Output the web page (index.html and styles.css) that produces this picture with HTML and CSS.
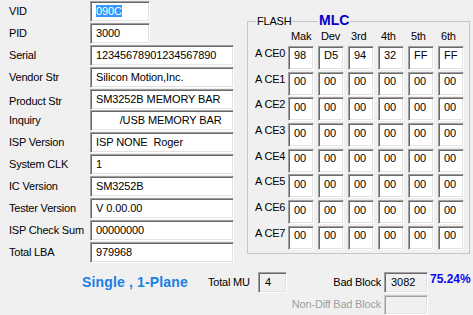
FILE: index.html
```html
<!DOCTYPE html>
<html>
<head>
<meta charset="utf-8">
<link rel="stylesheet" href="styles.css">
</head>
<body>
<div class="app">
  <div class="top">
    <div class="info">
      <span class="lbl">VID</span><div class="field short"><span class="sel">090C</span></div>
      <span class="lbl">PID</span><div class="field short">3000</div>
      <span class="lbl">Serial</span><div class="field">12345678901234567890</div>
      <span class="lbl">Vendor Str</span><div class="field">Silicon Motion,Inc.</div>
      <span class="lbl lower">Product Str</span><div class="field">SM3252B MEMORY BAR</div>
      <span class="lbl">Inquiry</span><div class="field">        /USB MEMORY BAR</div>
      <span class="lbl">ISP Version</span><div class="field">ISP NONE  Roger</div>
      <span class="lbl">System CLK</span><div class="field">1</div>
      <span class="lbl">IC Version</span><div class="field">SM3252B</div>
      <span class="lbl">Tester Version</span><div class="field">V 0.00.00</div>
      <span class="lbl">ISP Check Sum</span><div class="field">00000000</div>
      <span class="lbl">Total LBA</span><div class="field">979968</div>
    </div>
    <fieldset class="flash">
      <legend class="flash-title">FLASH<span class="mlc">MLC</span></legend>
      <div class="flash-grid">
        <span></span><span class="hd">Mak</span><span class="hd">Dev</span><span class="hd">3rd</span><span class="hd">4th</span><span class="hd">5th</span><span class="hd">6th</span>
        <span class="ce">A CE0</span><div class="cell">98</div><div class="cell">D5</div><div class="cell">94</div><div class="cell">32</div><div class="cell">FF</div><div class="cell">FF</div>
        <span class="ce">A CE1</span><div class="cell">00</div><div class="cell">00</div><div class="cell">00</div><div class="cell">00</div><div class="cell">00</div><div class="cell">00</div>
        <span class="ce">A CE2</span><div class="cell">00</div><div class="cell">00</div><div class="cell">00</div><div class="cell">00</div><div class="cell">00</div><div class="cell">00</div>
        <span class="ce">A CE3</span><div class="cell">00</div><div class="cell">00</div><div class="cell">00</div><div class="cell">00</div><div class="cell">00</div><div class="cell">00</div>
        <span class="ce">A CE4</span><div class="cell">00</div><div class="cell">00</div><div class="cell">00</div><div class="cell">00</div><div class="cell">00</div><div class="cell">00</div>
        <span class="ce">A CE5</span><div class="cell">00</div><div class="cell">00</div><div class="cell">00</div><div class="cell">00</div><div class="cell">00</div><div class="cell">00</div>
        <span class="ce">A CE6</span><div class="cell">00</div><div class="cell">00</div><div class="cell">00</div><div class="cell">00</div><div class="cell">00</div><div class="cell">00</div>
        <span class="ce">A CE7</span><div class="cell">00</div><div class="cell">00</div><div class="cell">00</div><div class="cell">00</div><div class="cell">00</div><div class="cell">00</div>
      </div>
    </fieldset>
  </div>
  <div class="bottom">
    <span class="mode">Single , 1-Plane</span>
    <span class="blabel">Total MU</span>
    <div class="ro">4</div>
    <span class="blabel right">Bad Block</span>
    <div class="ro">3082</div>
    <span class="pct">75.24%</span>
    <span class="blabel right nondiff">Non-Diff Bad Block</span>
    <div class="ro disabled"></div>
  </div>
</div>
</body>
</html>
```
FILE: styles.css
```css
html, body {
  margin: 0;
  background: #f0f0f0;
  font-family: "Liberation Sans", Arial, sans-serif;
  font-size: 11px;
  color: #000;
}
.app {
  width: 473px;
  height: 315px;
  overflow: hidden;
}
.top {
  display: flex;
  align-items: flex-start;
}
.info {
  display: grid;
  grid-template-columns: 81px 144px;
  grid-auto-rows: 21px;
  row-gap: 0.9px;
  padding: 1px 0 0 9px;
  align-items: center;
}
.lbl {
  line-height: 13px;
  letter-spacing: -0.2px;
  white-space: nowrap;
}
.lbl.lower {
  padding-top: 4px;
}
.field, .cell, .ro {
  box-sizing: border-box;
  background: #fff;
  border: 1px solid;
  border-color: #a0a0a0 #fff #fff #a0a0a0;
  box-shadow: inset 1px 1px 0 #696969, inset -1px -1px 0 #e3e3e3;
  line-height: 13px;
  white-space: pre;
}
.field {
  height: 21px;
  padding: 3px 5px;
  letter-spacing: -0.1px;
}
.field.short {
  width: 60px;
}
.sel {
  background: #3399ff;
  color: #fff;
}
.flash {
  margin: 15px 0 0 13px;
  padding: 0;
  width: 223px;
  box-sizing: border-box;
  border: 1px solid #c6c6c6;
  min-inline-size: 0;
}
.flash-title {
  margin-left: 8px;
  padding: 0 1px;
  line-height: 13px;
  position: relative;
  letter-spacing: -0.2px;
}
.mlc {
  position: absolute;
  left: 62px;
  top: -3px;
  font-weight: bold;
  font-size: 14px;
  line-height: 16px;
  letter-spacing: 0;
  color: #0000c8;
  background: #f0f0f0;
  padding: 0 1px;
}
.flash-grid {
  display: grid;
  grid-template-columns: 29px repeat(6, 26px);
  grid-template-rows: 14.3px repeat(8, 24px);
  column-gap: 4px;
  row-gap: 1.7px;
  padding: 2px 0 3px 7px;
}
.hd {
  padding-left: 3px;
  line-height: 13px;
  align-self: start;
  letter-spacing: -0.2px;
}
.ce {
  line-height: 13px;
  padding-top: 1px;
  align-self: start;
  white-space: nowrap;
  letter-spacing: -0.2px;
}
.cell {
  padding: 2.5px 0 0 5px;
}
.bottom {
  display: grid;
  grid-template-columns: 126px 50px 29px 97px 44px 1fr;
  grid-template-rows: 21px 20px;
  row-gap: 2px;
  padding-left: 82px;
  margin-top: 9px;
}
.mode {
  font-weight: bold;
  font-size: 14px;
  line-height: 16px;
  letter-spacing: 0.15px;
  color: #1a7fe6;
  align-self: center;
  white-space: nowrap;
}
.blabel {
  line-height: 13px;
  align-self: center;
  white-space: nowrap;
  letter-spacing: -0.2px;
}
.blabel.right {
  justify-self: end;
  padding-right: 3px;
}
.nondiff {
  grid-column: 1 / 5;
  color: #a0a0a0;
}
.ro {
  background: #f0f0f0;
  padding: 3px 6px;
}
.ro.disabled {
  border-color: #c8c8c8 #fff #fff #c8c8c8;
  box-shadow: inset 1px 1px 0 #a0a0a0, inset -1px -1px 0 #e3e3e3;
}
.pct {
  font-weight: bold;
  font-size: 12px;
  line-height: 14px;
  color: #0a0af0;
  padding-left: 2px;
  align-self: start;
}
```
